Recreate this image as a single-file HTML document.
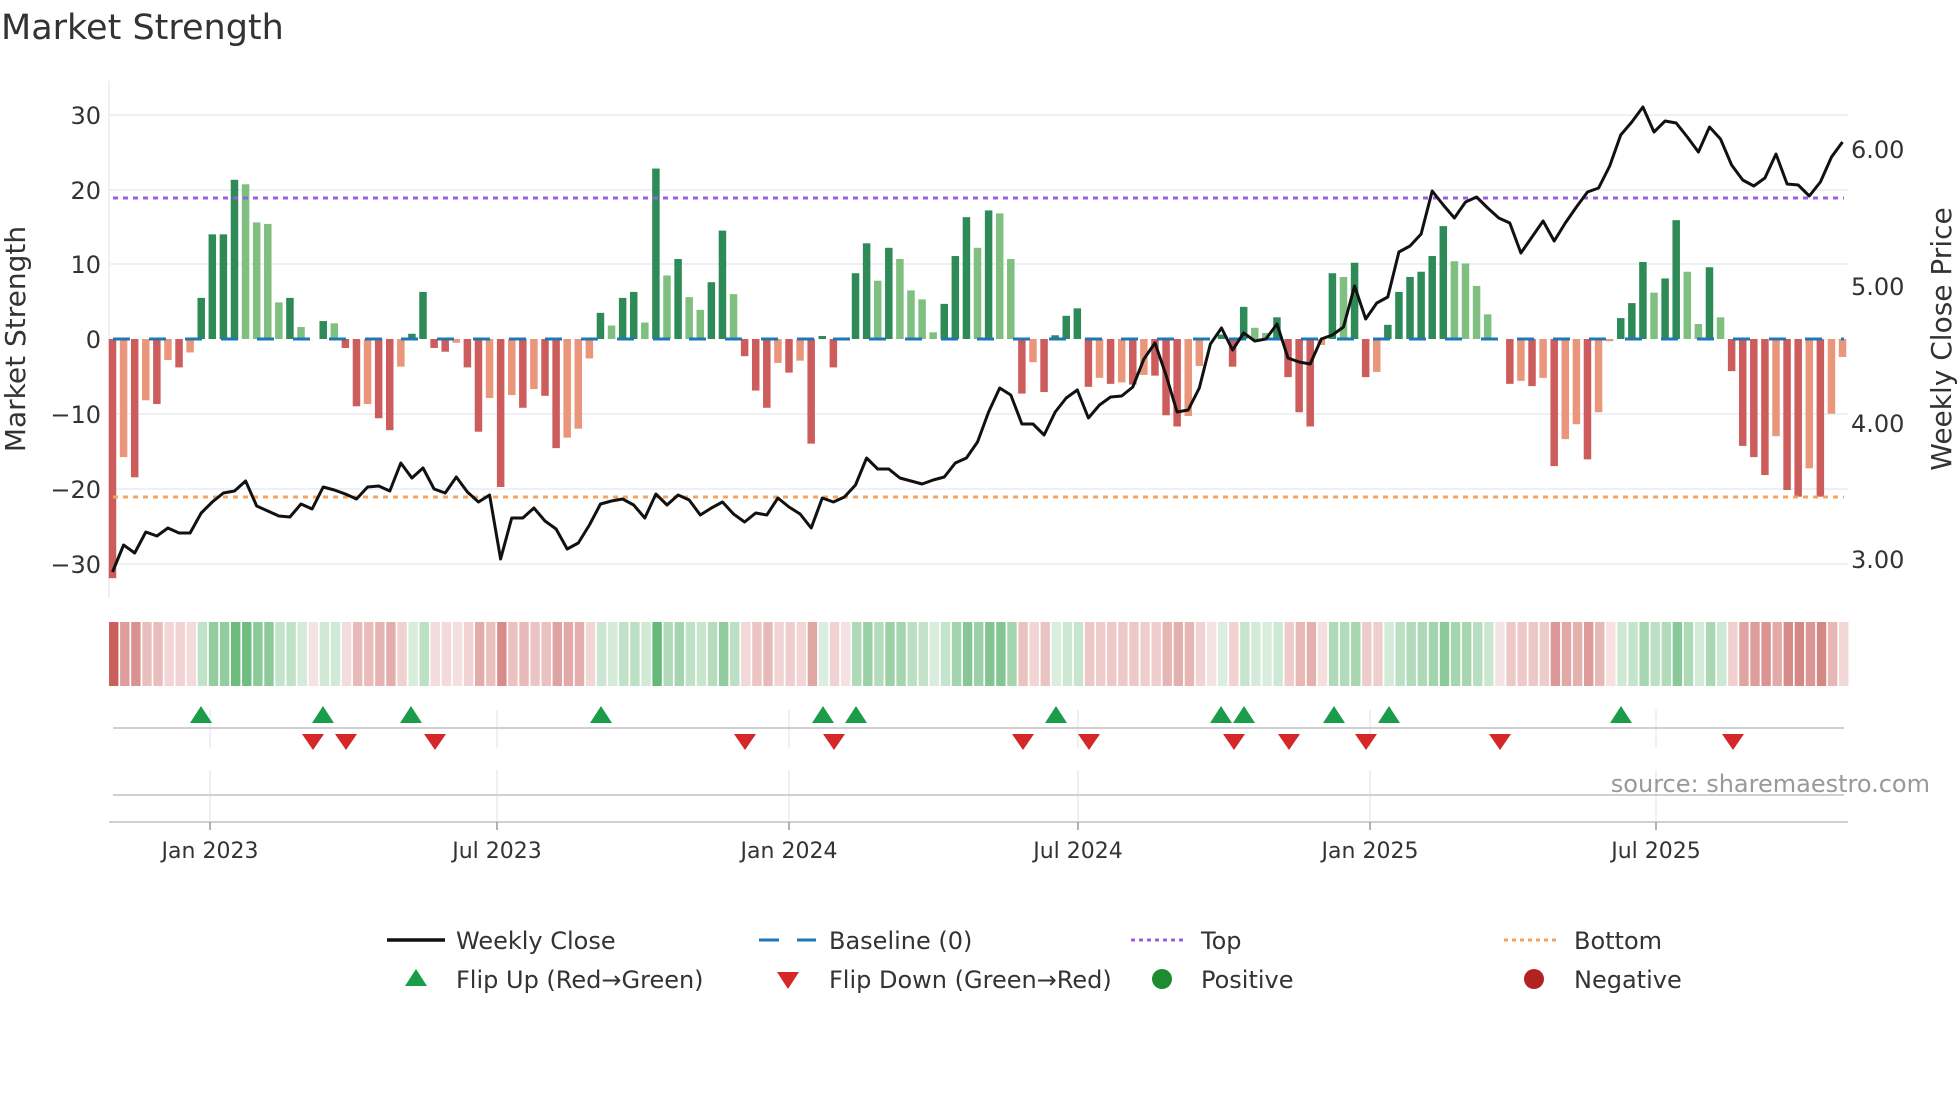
<!DOCTYPE html>
<html><head><meta charset="utf-8">
<style>
html,body{margin:0;padding:0;background:#fff;}
body{width:1960px;height:1102px;overflow:hidden;}
svg{display:block;font-family:"DejaVu Sans","Liberation Sans",sans-serif;}
</style></head>
<body>
<svg id="s" width="1960" height="1102" viewBox="0 0 1960 1102" xmlns="http://www.w3.org/2000/svg">
<rect width="1960" height="1102" fill="#fff"/>
<text x="1" y="39" font-size="35" fill="#333">Market Strength</text>
<g stroke="#edf0f4" stroke-width="2">
<line x1="109" x2="1848" y1="115" y2="115"/>
<line x1="109" x2="1848" y1="190" y2="190"/>
<line x1="109" x2="1848" y1="264" y2="264"/>
<line x1="109" x2="1848" y1="414" y2="414"/>
<line x1="109" x2="1848" y1="489" y2="489"/>
<line x1="109" x2="1848" y1="564" y2="564"/>
<line x1="109" x2="109" y1="81" y2="598"/>
</g>
<g font-size="24" fill="#333" text-anchor="end">
<text x="101" y="124">30</text>
<text x="101" y="199">20</text>
<text x="101" y="273">10</text>
<text x="101" y="348">0</text>
<text x="101" y="423">−10</text>
<text x="101" y="498">−20</text>
<text x="101" y="573">−30</text>
</g>
<g font-size="24" fill="#333">
<text x="1851" y="158">6.00</text>
<text x="1851" y="295">5.00</text>
<text x="1851" y="432">4.00</text>
<text x="1851" y="568">3.00</text>
</g>
<text transform="translate(25,339) rotate(-90)" font-size="28" fill="#333" text-anchor="middle">Market Strength</text>
<text transform="translate(1951,339) rotate(-90)" font-size="28" fill="#333" text-anchor="middle">Weekly Close Price</text>
<g id="bars"></g>
<g id="heat"></g>
<line x1="113" x2="1844" y1="198" y2="198" stroke="#9b5de5" stroke-width="3" stroke-dasharray="5 5"/>
<line x1="113" x2="1844" y1="497" y2="497" stroke="#f4a460" stroke-width="3" stroke-dasharray="5 5"/>
<line x1="113" x2="1844" y1="339" y2="339" stroke="#1f77b4" stroke-width="3" stroke-dasharray="17 19"/>
<polyline id="pl" fill="none" stroke="#111" stroke-width="3" stroke-linejoin="round"/>
<g stroke="#e8eaee" stroke-width="1.5">
<line x1="210" x2="210" y1="710" y2="748"/><line x1="497" x2="497" y1="710" y2="748"/><line x1="789" x2="789" y1="710" y2="748"/><line x1="1078" x2="1078" y1="710" y2="748"/><line x1="1370" x2="1370" y1="710" y2="748"/><line x1="1656" x2="1656" y1="710" y2="748"/>
<line x1="210" x2="210" y1="770" y2="822"/><line x1="497" x2="497" y1="770" y2="822"/><line x1="789" x2="789" y1="770" y2="822"/><line x1="1078" x2="1078" y1="770" y2="822"/><line x1="1370" x2="1370" y1="770" y2="822"/><line x1="1656" x2="1656" y1="770" y2="822"/>
</g>
<line x1="113" x2="1844" y1="728" y2="728" stroke="#d0d0d0" stroke-width="2"/>
<line x1="113" x2="1844" y1="795" y2="795" stroke="#d0d0d0" stroke-width="2"/>
<line x1="109" x2="1848" y1="822" y2="822" stroke="#cfcfcf" stroke-width="2"/>
<g stroke="#999" stroke-width="1.5">
<line x1="210" x2="210" y1="822" y2="830"/><line x1="497" x2="497" y1="822" y2="830"/><line x1="789" x2="789" y1="822" y2="830"/><line x1="1078" x2="1078" y1="822" y2="830"/><line x1="1370" x2="1370" y1="822" y2="830"/><line x1="1656" x2="1656" y1="822" y2="830"/>
</g>
<g id="mk"></g>
<text x="1930" y="792" font-size="24" fill="#999" text-anchor="end">source: sharemaestro.com</text>
<g font-size="22" fill="#333" text-anchor="middle">
<text x="210" y="858">Jan 2023</text>
<text x="497" y="858">Jul 2023</text>
<text x="789" y="858">Jan 2024</text>
<text x="1078" y="858">Jul 2024</text>
<text x="1370" y="858">Jan 2025</text>
<text x="1656" y="858">Jul 2025</text>
</g>
<line x1="387" x2="445" y1="940" y2="940" stroke="#111" stroke-width="3.5"/>
<line x1="759" x2="779" y1="940" y2="940" stroke="#1f77b4" stroke-width="3"/>
<line x1="797" x2="816" y1="940" y2="940" stroke="#1f77b4" stroke-width="3"/>
<line x1="1131" x2="1186" y1="940" y2="940" stroke="#9b5de5" stroke-width="3" stroke-dasharray="4 4"/>
<line x1="1504" x2="1559" y1="940" y2="940" stroke="#f4a460" stroke-width="3" stroke-dasharray="4 4"/>
<polygon points="405,986 427,986 416,969" fill="#1a9c4a"/>
<polygon points="777,972 799,972 788,989" fill="#d62728"/>
<circle cx="1162" cy="979" r="10" fill="#1e8c2e"/>
<circle cx="1534" cy="979" r="10" fill="#b22222"/>
<g font-size="24" fill="#333">
<text x="456" y="949">Weekly Close</text>
<text x="829" y="949">Baseline (0)</text>
<text x="1201" y="949">Top</text>
<text x="1574" y="949">Bottom</text>
<text x="456" y="988">Flip Up (Red→Green)</text>
<text x="829" y="988">Flip Down (Green→Red)</text>
<text x="1201" y="988">Positive</text>
<text x="1574" y="988">Negative</text>
</g>
</svg>
<script>
var v=[-32,-15.8,-18.5,-8.2,-8.7,-2.8,-3.8,-1.8,5.5,14,14,21.3,20.7,15.6,15.4,4.9,5.5,1.6,0,2.4,2.1,-1.2,-9,-8.7,-10.6,-12.2,-3.7,0.7,6.3,-1.2,-1.7,-0.5,-3.8,-12.4,-7.9,-19.8,-7.5,-9.2,-6.7,-7.6,-14.6,-13.2,-12,-2.6,3.5,1.8,5.5,6.3,2.2,22.8,8.5,10.7,5.6,3.9,7.6,14.5,6,-2.3,-6.9,-9.2,-3.2,-4.5,-2.9,-14,0.4,-3.8,0,8.8,12.8,7.8,12.2,10.7,6.5,5.3,0.9,4.7,11.1,16.3,12.2,17.2,16.8,10.7,-7.3,-3.1,-7.1,0.5,3.1,4.1,-6.4,-5.2,-6,-5.8,-6.1,-4.8,-4.9,-10.2,-11.7,-10.3,-3.6,0,0.6,-3.7,4.3,1.5,0.8,2.9,-5.1,-9.8,-11.7,-0.8,8.8,8.3,10.2,-5.1,-4.4,1.9,6.3,8.3,9,11.1,15.1,10.4,10.1,7.1,3.3,0,-6,-5.6,-6.3,-5.2,-17,-13.4,-11.4,-16.1,-9.8,-0.3,2.8,4.8,10.3,6.2,8.1,15.9,9,2,9.6,2.9,-4.3,-14.3,-15.8,-18.2,-13,-20.2,-21.1,-17.3,-21.1,-10,-2.4];
var ly=[572,545,553,532,536,528,533,533,513,502,493,491,481,506,511,516,517,504,509,487,490,494,499,487,486,491,463,478,468,489,493,477,492,502,495,559,518,518,508,521,529,549,543,525,504,501,499,505,518,494,505,495,500,515,508,502,514,522,513,515,498,507,514,528,498,502,497,485,458,469,469,478,481,484,480,477,463,458,442,412,388,395,424,424,435,412,398,390,418,405,397,396,387,359,343,375,412,410,388,344,328,350,333,341,339,324,358,362,364,339,335,327,286,319,303,297,252,246,234,191,205,218,202,197,208,218,223,253,237,221,241,223,207,192,188,166,135,122,107,132,121,123,137,152,127,139,165,180,186,178,154,184,185,196,182,157,142];
var NS="http://www.w3.org/2000/svg";
function el(t,a,p){var e=document.createElementNS(NS,t);for(var k in a)e.setAttribute(k,a[k]);p.appendChild(e);return e;}
var bars=document.getElementById('bars'),heat=document.getElementById('heat'),mk=document.getElementById('mk');
var pts=[];
for(var i=0;i<v.length;i++){
 var x=112.5+11.09*i,val=v[i],prev=i?v[i-1]:0,c;
 if(val>0){c=(val>=prev)?'#2e8b57':'#7fbf7f';}else{c=(val<=prev)?'#cd5c5c':'#e9967a';}
 if(val!==0){var h=Math.abs(val)*7.475;el('rect',{x:x-3.75,y:val>0?339-h:339,width:7.5,height:h,fill:c},bars);}
 var t=0.18+0.82*Math.min(1,Math.abs(val)/30),b=val>0?[63,166,85]:[200,96,92];
 var col='rgb('+b.map(function(q){return Math.round(255-(255-q)*t);}).join(',')+')';
 el('rect',{x:109+11.09*i,y:622,width:9.4,height:64,fill:col},heat);
 pts.push(x.toFixed(1)+','+ly[i]);
}
document.getElementById('pl').setAttribute('points',pts.join(' '));
[201,323,411,601,823,856,1056,1221,1244,1334,1389,1621].forEach(function(x){el('polygon',{points:(x-11)+',723 '+(x+11)+',723 '+x+',706',fill:'#1a9c4a'},mk);});
[313,346,435,745,834,1023,1089,1234,1289,1366,1500,1733].forEach(function(x){el('polygon',{points:(x-11)+',734 '+(x+11)+',734 '+x+',750',fill:'#d62728'},mk);});
</script>
</body></html>
